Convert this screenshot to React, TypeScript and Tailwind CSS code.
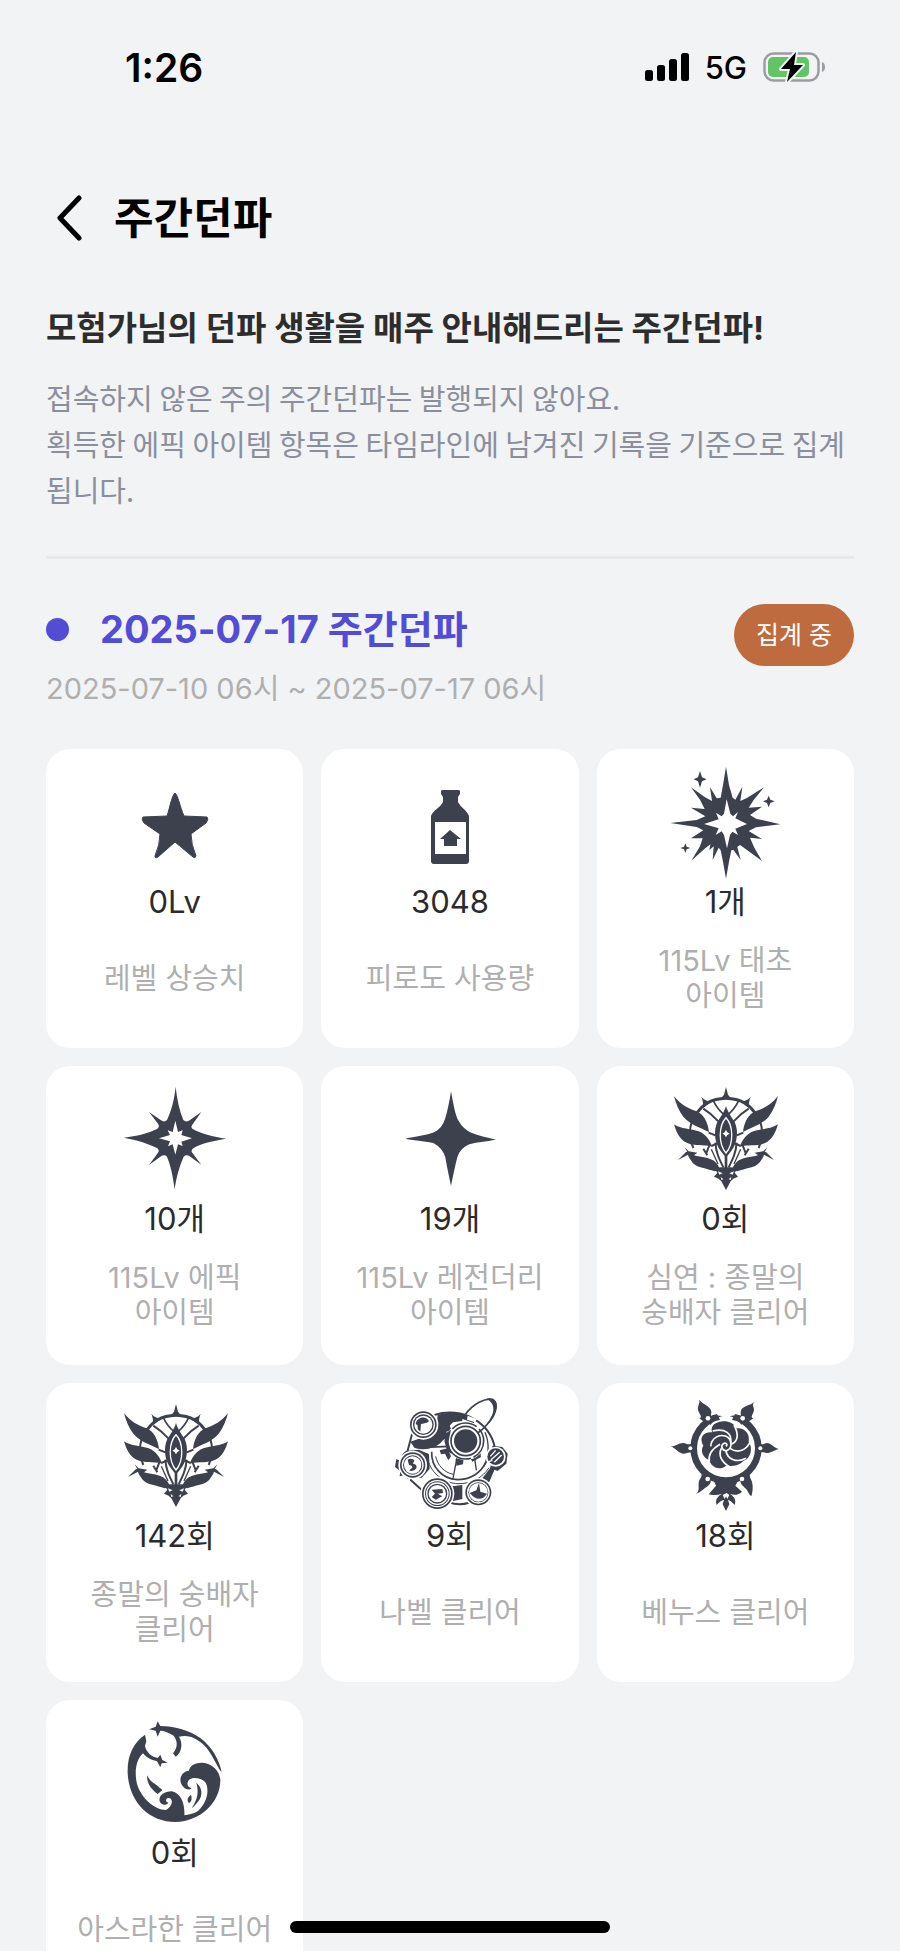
import React from "react";

type IconName =
    | "star"
    | "bottle"
    | "primeval"
    | "epic"
    | "legendary"
    | "abyss"
    | "nabel"
    | "venus"
    | "asrahan";

interface IWeeklyStat {
    id: number;
    icon: IconName;
    value: string;
    label: string;
}

const stats: IWeeklyStat[] = [
    { id: 1, icon: "star", value: "0Lv", label: "레벨 상승치" },
    { id: 2, icon: "bottle", value: "3048", label: "피로도 사용량" },
    { id: 3, icon: "primeval", value: "1개", label: "115Lv 태초 아이템" },
    { id: 4, icon: "epic", value: "10개", label: "115Lv 에픽 아이템" },
    { id: 5, icon: "legendary", value: "19개", label: "115Lv 레전더리 아이템" },
    { id: 6, icon: "abyss", value: "0회", label: "심연 : 종말의 숭배자 클리어" },
    { id: 7, icon: "abyss", value: "142회", label: "종말의 숭배자 클리어" },
    { id: 8, icon: "nabel", value: "9회", label: "나벨 클리어" },
    { id: 9, icon: "venus", value: "18회", label: "베누스 클리어" },
    { id: 10, icon: "asrahan", value: "0회", label: "아스라한 클리어" },
];

// one side of the winged crest, mirrored for the other side
const CrestHalf = () => (
    <g>
        <path d="M14 36 C34 62 58 74 82 82 C104 92 116 116 119 144 C92 130 62 122 42 98 C28 80 20 60 14 36Z" />
        <path d="M14 121 C36 136 64 134 88 142 C112 152 122 170 128 188 C104 180 68 190 44 172 C26 158 20 140 14 121Z" />
        <path d="M46 190 L58 202 L84 206 L74 214 C96 220 122 220 138 234 C146 242 150 250 152 258 L136 262 C112 252 84 252 70 236 C60 224 54 212 56 208Z" />
        <path d="M26 228 L50 204 L60 204 L56 212Z" />
        <path d="M96 38 C104 48 114 52 126 52 L102 72 C102 58 100 48 96 38Z" />
        <g fill="none" stroke="currentColor">
            <path d="M78 96 C96 62 130 44 170 43" strokeWidth="9" />
            <path d="M68 110 C60 134 60 166 72 192" strokeWidth="6" />
            <path d="M102 74 C118 84 134 98 147 112" strokeWidth="6" />
            <path d="M132 50 C140 68 152 82 166 94" strokeWidth="5" />
            <path d="M118 146 L138 154 M126 186 L144 178 M120 184 L110 210 M102 194 L114 214" strokeWidth="6" />
            <path d="M138 176 C140 206 150 226 162 250" strokeWidth="6" />
            <path d="M126 196 L146 240" strokeWidth="4" />
        </g>
    </g>
);

const Ring = ({ x, y, r, core }: { x: number; y: number; r: number; core: number }) => (
    <g>
        <circle cx={x} cy={y} r={r + 5} fill="#fff" />
        <circle cx={x} cy={y} r={r} />
        <circle cx={x} cy={y} r={r - 5} fill="#fff" />
        <circle cx={x} cy={y} r={r - 9} />
        <circle cx={x} cy={y} r={core} fill="#fff" />
    </g>
);

const icons: Record<IconName, { viewBox: string; art: React.ReactNode }> = {
    star: {
        viewBox: "0 0 120 120",
        art: (
            <path
                d="M60 30 C63 32 65 44 69 53 L92 54 Q94 56 91 60 L76 71 Q76 81 81 93 Q80 96 78 94 L60 79 L43 94 Q40 96 40 93 Q45 81 45 71 L29 60 Q26 56 28 54 L52 53 C55 44 57 32 60 30Z"
                stroke="currentColor"
                strokeWidth="1"
                strokeLinejoin="round"
            />
        ),
    },
    bottle: {
        viewBox: "0 0 120 120",
        art: (
            <>
                <path d="M51 28 Q51 27 53 27 H68 Q70 27 70 28 V31 L68 34 V39 C71 45 77 47 79 53 V98 Q79 101 76 101 H44 Q41 101 41 98 V53 C43 47 50 45 53 39 V34 L51 31Z" />
                <path d="M45 59 H76 V91 H45Z" fill="#fff" />
                <path d="M60 67 L71 76 H67 V83 H54 V76 H50Z" />
            </>
        ),
    },
    primeval: {
        viewBox: "17 24 360 360",
        art: (
            <>
                <path d="M200 35 L209 90 L220 128 L228 134 L249 95 L243 138 L264 128 L314 97 L283 135 L268 158 L308 155 L272 180 L290 191 L363 208 L290 217 L268 228 L308 252 L272 248 L285 278 L308 318 L264 286 L242 270 L234 276 L244 315 L222 284 L216 286 L209 320 L200 371 L191 320 L184 286 L178 278 L160 315 L163 274 L150 286 L153 268 L135 282 L96 317 L122 274 L130 250 L95 250 L132 226 L112 216 L33 204 L112 195 L138 184 L95 158 L136 162 L122 134 L95 97 L136 126 L158 138 L152 96 L172 130 L184 128 L191 90Z" />
                <path d="M202 132 L213 176 L221 184 L236 171 L228 190 L263 207 L228 221 L236 240 L219 230 L212 240 L203 280 L194 240 L187 229 L169 240 L178 220 L134 207 L178 193 L170 173 L187 184 L194 176Z" fill="#fff" />
                <path d="M122 48 L128 67 L142 73 L128 79 L122 98 L116 79 L103 73 L116 67Z" />
                <path d="M328 122 L333 134 L346 139 L333 144 L328 157 L323 144 L311 139 L323 134Z" />
                <path d="M78 265 L82 275 L93 279 L82 283 L78 294 L74 283 L63 279 L74 275Z" />
            </>
        ),
    },
    epic: {
        viewBox: "14 18 360 360",
        art: (
            <>
                <path d="M196 38 C200 76 207 108 219 138 Q228 146 238 139 L273 114 L248 149 Q240 158 246 164 C270 178 308 188 348 194 C310 200 270 208 247 224 Q240 232 248 239 L273 272 L238 247 Q228 240 220 248 C207 278 198 308 193 346 C188 308 182 278 170 248 Q162 240 152 247 L116 273 L142 238 Q149 230 141 223 C112 208 80 198 40 191 C80 186 112 178 141 164 Q149 158 143 149 L116 114 L152 139 Q162 146 170 138 C184 108 192 76 196 38Z" />
                <path d="M195 140 L203 174 L217 169 L213 183 L245 193 L213 203 L217 216 L203 211 L195 242 L187 211 L173 217 L179 202 L146 193 L179 183 L172 169 L187 174Z" fill="#fff" />
            </>
        ),
    },
    legendary: {
        viewBox: "840 18 360 360",
        art: (
            <path d="M1023 52 C1030 92 1037 128 1046 141 Q1060 166 1084 176 C1105 184 1130 190 1158 197 C1130 202 1095 205 1078 211 Q1050 222 1042 250 C1036 272 1030 304 1023 335 C1016 304 1010 272 1006 250 Q998 222 970 207 C950 202 915 200 886 194 C915 188 950 184 972 175 Q996 164 1005 135 C1012 115 1018 84 1023 52Z" />
        ),
    },
    abyss: {
        viewBox: "-13 -12 360 360",
        art: (
            <>
                <path d="M170 9 L176 32 L186 44 H154 L164 32Z" />
                <CrestHalf />
                <g transform="translate(340 0) scale(-1 1)">
                    <CrestHalf />
                </g>
                <path d="M170 66 C176 86 186 98 196 114 C208 140 204 176 188 198 L174 216 V262 H166 V216 L152 198 C136 176 132 140 144 114 C154 98 164 86 170 66Z" />
                <path d="M170 101 C192 124 194 180 170 207 C146 180 148 124 170 101Z" fill="none" stroke="#fff" strokeWidth="4" />
                <path d="M170 138 L174 145 L181 149 L174 153 L170 160 L166 153 L159 149 L166 145Z" fill="#fff" />
                <path d="M134 252 L156 250 H184 L206 252 L196 266 L206 278 L192 284 L184 292 L170 318 L156 292 L148 284 L134 278 L144 266Z" />
                <path d="M146 262 L160 268 L150 272Z M194 262 L180 268 L190 272Z M154 278 L162 286 L156 288Z M186 278 L178 286 L184 288Z" fill="#fff" />
            </>
        ),
    },
    nabel: {
        viewBox: "15 12 360 360",
        art: (
            <>
                <path d="M148 66 C186 54 232 56 270 80 C306 102 324 134 330 166 L332 214 L310 264 L276 316 C250 336 216 336 190 328 L120 300 L78 262 L66 180 L82 120Z" fill="#fff" stroke="currentColor" strokeWidth="6" />
                <path d="M158 66 C196 54 240 58 272 80 L266 90 L232 78 L232 84 L204 88 L194 98 L200 112 L184 116 L188 132 L174 142 C160 162 124 176 88 164 L76 146 L152 120Z" />
                <path d="M98 164 L194 160 M140 176 C138 222 172 258 216 260 C256 260 288 240 304 206" fill="none" stroke="currentColor" strokeWidth="5" />
                <path d="M152 190 C158 218 178 238 204 244 M126 180 C126 226 166 272 222 272 C262 272 292 254 312 224" fill="none" stroke="currentColor" strokeWidth="3" />
                <path d="M216 194 L204 256 M268 188 L274 232 M300 118 C314 150 312 192 296 220" fill="none" stroke="currentColor" strokeWidth="4" />
                <path d="M164 172 L188 166 L198 190 L190 202 L180 182 L168 184Z M212 198 L236 194 L234 214 L214 218Z M250 186 L286 178 L288 192 L262 206Z" />
                <path d="M318 222 L334 216 L312 268 L292 256Z" />
                <circle cx="242" cy="144" r="58" fill="#fff" />
                <circle cx="242" cy="144" r="54" fill="none" stroke="currentColor" strokeWidth="5" strokeDasharray="60 8 110 30 80 10" />
                <circle cx="242" cy="144" r="44" fill="none" stroke="currentColor" strokeWidth="5" />
                <circle cx="242" cy="144" r="35" />
                <path d="M184 120 L198 110 L190 148 L200 184 L186 172 L178 144Z" />
                <path d="M248 68 L276 78 L270 88 L246 80Z" fill="#fff" />
                <path d="M238 68 C264 30 302 14 324 20 C348 36 318 92 278 120" fill="none" stroke="currentColor" strokeWidth="5" />
                <path d="M304 17 C350 8 342 68 304 98 C328 66 336 32 304 17Z" />
                <Ring x={115} y={95} r={40} core={27} />
                <path d="M92 92 C96 72 122 66 132 84 C126 94 108 88 100 100Z M98 98 L108 92 L106 116 L98 108Z" />
                <path d="M34 198 L46 204 L52 184 L62 174 L102 170 L132 184 L134 228 L110 254 L68 258 L60 246 L44 250 L46 234 L30 222Z" />
                <Ring x={83} y={216} r={38} core={26} />
                <path d="M68 200 Q80 194 88 202 L84 212 Q98 214 94 226 Q86 238 72 232 L82 224 Q82 216 72 216Z" />
                <path d="M200 280 L232 276 L232 318 L204 324Z" />
                <Ring x={157} y={302} r={46} core={34} />
                <circle cx="157" cy="302" r="28" fill="none" stroke="currentColor" strokeWidth="4" />
                <path d="M140 290 L172 288 L174 300 L158 302 L172 310 L152 320 L140 312 L150 302Z" />
                <Ring x={280} y={298} r={39} core={28} />
                <path d="M254 300 L274 292 L282 270 L286 296 L306 302 Q284 334 254 300Z" />
                <path d="M322 158 L352 162 L368 182 L364 212 L338 234 L316 226Z" />
                <circle cx="332" cy="191" r="30" fill="#fff" />
                <circle cx="332" cy="191" r="25" />
                <path d="M316 190 L332 172 M318 200 L344 178 M328 208 L350 186 M312 206 L322 202" fill="none" stroke="#fff" strokeWidth="4" />
            </>
        ),
    },
    venus: {
        viewBox: "19 12 360 360",
        art: (
            <>
                <circle cx="202" cy="166" r="97" fill="none" stroke="currentColor" strokeWidth="20" />
                <path d="M168 50 H236 L218 84 H186Z" fill="#fff" />
                <path d="M146 84 C158 68 174 64 192 70 C176 72 166 80 156 96Z M256 84 C246 68 230 64 212 70 C228 72 238 80 248 96Z" />
                <path d="M122 20 C130 34 156 38 158 56 C158 66 154 70 162 80 L140 90 L122 76 C134 72 120 62 118 50 C116 38 124 34 122 20Z" />
                <path d="M288 26 C276 38 248 38 246 56 C246 66 248 70 240 80 L264 90 L284 76 C272 72 286 62 286 50 C286 40 278 36 288 26Z" />
                <path d="M36 160 C52 160 62 148 76 150 C86 152 86 158 104 150 V182 C88 174 86 182 76 182 C60 182 54 168 36 160Z" />
                <path d="M360 168 C344 164 338 150 324 150 C314 152 314 158 298 150 V182 C314 174 314 180 324 180 C338 180 346 172 360 168Z" />
                <path d="M112 302 C126 294 116 276 122 262 C126 254 130 252 128 244 L156 256 C158 270 154 274 144 282 C132 288 128 298 112 302Z" />
                <path d="M278 310 C282 298 284 280 280 266 C276 256 272 252 274 244 L246 256 C242 270 250 276 258 284 C268 290 268 302 278 310Z" />
                <path d="M160 250 L202 262 L246 250 L230 278 L250 296 C238 308 224 306 214 302 C224 310 234 318 228 336 C220 326 214 322 208 320 L212 334 L202 354 L192 334 L196 320 C188 322 182 326 174 336 C168 318 178 310 190 302 C178 306 162 308 150 304 L172 278Z" />
                <path d="M192 306 L204 300 L212 306 L206 318 L202 310 L198 318Z" fill="#fff" />
                <path d="M166 94 C188 78 222 82 234 106 C260 104 274 124 270 146 C284 166 276 196 254 204 C240 220 216 220 202 218 C184 234 158 224 152 202 C132 192 124 174 134 158 C120 134 134 116 160 118 Q156 104 166 94Z" />
                <g fill="none" stroke="#fff" strokeWidth="5">
                    <path d="M202 160 C208 154 202 148 194 152 C184 160 192 176 206 172 C222 164 220 138 202 130 C180 122 158 136 156 160" />
                    <path d="M216 148 C220 124 202 104 162 114 M218 154 C240 144 240 122 226 96 M214 166 C240 184 262 170 274 148 M202 174 C206 200 236 210 262 196 M188 166 C178 186 188 208 214 222 M184 154 C160 168 148 184 152 206" />
                </g>
                <g fill="#fff">
                    <circle cx="148" cy="76" r="7" />
                    <circle cx="252" cy="76" r="7" />
                    <circle cx="95" cy="166" r="6" />
                    <circle cx="305" cy="166" r="6" />
                    <circle cx="147" cy="258" r="7" />
                    <circle cx="250" cy="258" r="7" />
                </g>
            </>
        ),
    },
    asrahan: {
        viewBox: "14 6 360 360",
        art: (
            <>
                <path d="M104 68 C66 94 50 136 52 184 C56 266 112 330 196 330 C270 328 330 272 330 204 C328 174 304 154 276 152 C248 152 238 164 236 176 C216 178 206 196 212 214 C218 230 236 238 244 228 C230 226 228 212 236 204 C250 192 276 200 286 212 C298 236 290 272 262 298 C248 306 234 308 222 310 C224 278 214 244 184 238 C160 238 144 252 148 268 C152 280 168 282 174 272 C164 270 166 258 174 258 C190 258 188 284 166 294 C134 294 92 258 80 216 C72 182 76 144 98 124 C112 142 128 144 140 148 L150 166 L154 154 L172 152 L156 144 L150 128 L142 138 C122 134 108 120 104 102 L108 88Z" />
                <path d="M142 28 L150 42 C190 42 236 54 270 78 C306 106 326 142 334 180 C316 160 302 108 264 86 C244 72 224 70 206 74 C220 96 212 124 196 134 L188 124 C204 106 202 84 188 70 C174 62 160 56 150 56 L142 74 L136 56 L116 52 L136 44Z" />
                <path d="M110 190 C122 214 140 216 148 228 C156 232 158 236 152 238 L142 246 C124 232 110 218 110 190Z" />
                <path d="M258 212 C276 226 278 250 264 268 C256 278 250 286 244 288 C262 262 266 240 258 212Z" />
                <path d="M242 248 Q248 264 236 274 Q224 262 242 248Z" />
            </>
        ),
    },
};

const StatIcon = ({ name }: { name: IconName }) => {
    const { viewBox, art } = icons[name];
    return (
        <svg viewBox={viewBox} className="w-[120px] h-[120px] text-[#3d414d]" fill="currentColor" aria-hidden="true">
            {art}
        </svg>
    );
};

const StatCard = ({ stat }: { stat: IWeeklyStat }) => {
    return (
        <li className="flex flex-col items-center bg-white rounded-3xl px-6 pt-[14px] pb-[33px]">
            <StatIcon name={stat.icon} />
            <p className="text-[31px] leading-[38px] text-[#2b2b2b]">{stat.value}</p>
            <div className="mt-5 flex h-[74px] items-center">
                <p className="text-[29px] leading-[35px] text-center break-keep text-[#afafaf]">{stat.label}</p>
            </div>
        </li>
    );
};

const StatusBar = () => {
    return (
        <div className="flex h-[134px] shrink-0 items-center justify-between pl-[125px] pr-[75px] text-black">
            <span className="text-[39px] leading-none font-semibold">1:26</span>
            <div className="flex items-center gap-4">
                <svg viewBox="0 0 44 28" className="w-11 h-7" fill="currentColor" aria-hidden="true">
                    <rect x="0" y="17" width="8" height="11" rx="2.5" />
                    <rect x="12" y="12" width="8" height="16" rx="2.5" />
                    <rect x="24" y="6" width="8" height="22" rx="2.5" />
                    <rect x="36" y="0" width="8" height="28" rx="2.5" />
                </svg>
                <span className="text-[31px] leading-none font-medium">5G</span>
                <svg viewBox="0 0 62 32" className="w-[62px] h-8" aria-hidden="true">
                    <rect x="1.5" y="2.5" width="54" height="27" rx="9" fill="none" stroke="#9c9da1" strokeWidth="2.5" />
                    <rect x="5" y="6" width="41" height="20" rx="5" fill="#63c466" />
                    <path d="M59 11 Q62 12 62 16 Q62 20 59 21Z" fill="#9c9da1" />
                    <path
                        d="M33 1 L18 18 H27 L24 31 L40 14 H31Z"
                        fill="#000"
                        stroke="#f2f3f5"
                        strokeWidth="4"
                        strokeLinejoin="round"
                        paintOrder="stroke"
                    />
                </svg>
            </div>
        </div>
    );
};

const App = () => {
    return (
        <div className="relative flex h-screen flex-col overflow-hidden bg-[#f2f3f5] font-['Inter','Noto_Sans_CJK_KR',sans-serif]">
            <StatusBar />
            <div className="flex-1 overflow-y-auto px-[46px] [scrollbar-width:none]">
                <header className="flex h-[168px] items-center gap-[29px]">
                    <button type="button" aria-label="뒤로" className="pl-[9px] cursor-pointer">
                        <svg viewBox="0 0 30 46" className="w-[30px] h-[46px]" fill="none" stroke="#000" strokeWidth="5" strokeLinecap="round" strokeLinejoin="round" aria-hidden="true">
                            <path d="M24 3 L5 23 L24 43" />
                        </svg>
                    </button>
                    <h1 className="text-[43px] leading-[60px] font-bold text-black">주간던파</h1>
                </header>

                <section>
                    <h2 className="text-[33px] leading-[52px] font-bold text-[#2d2d2d]">
                        모험가님의 던파 생활을 매주 안내해드리는 주간던파!
                    </h2>
                    <p className="mt-5 text-[29px] leading-[46px] text-[#8b8f9b] font-['Noto_Sans_CJK_KR',sans-serif]">
                        접속하지 않은 주의 주간던파는 발행되지 않아요.
                        <br />
                        획득한 에픽 아이템 항목은 타임라인에 남겨진 기록을 기준으로 집계됩니다.
                    </p>
                </section>

                <hr className="mt-11 border-t-[3px] border-[#e8e9eb]" />

                <section className="mt-[45px]">
                    <div className="flex items-start justify-between">
                        <div>
                            <h3 className="flex items-center gap-[31px] text-[38px] leading-[50px] font-bold text-[#534dd6]">
                                <span className="h-[23px] w-[23px] rounded-full bg-[#534dd6]"></span>
                                2025-07-17 주간던파
                            </h3>
                            <p className="mt-[15px] text-[29px] leading-10 text-[#afafaf]">
                                2025-07-10 06시 ~ 2025-07-17 06시
                            </p>
                        </div>
                        <span className="rounded-full bg-[#be6b3f] px-[22px] text-[25px] leading-[62px] text-white">
                            집계 중
                        </span>
                    </div>

                    <ul className="mt-10 grid grid-cols-3 gap-[18px] pb-16">
                        {stats.map((stat) => (
                            <StatCard key={stat.id} stat={stat} />
                        ))}
                    </ul>
                </section>
            </div>
            {/* home indicator */}
            <div className="absolute bottom-[18px] left-1/2 h-3 w-80 -translate-x-1/2 rounded-full bg-black"></div>
        </div>
    );
};

export default App;
